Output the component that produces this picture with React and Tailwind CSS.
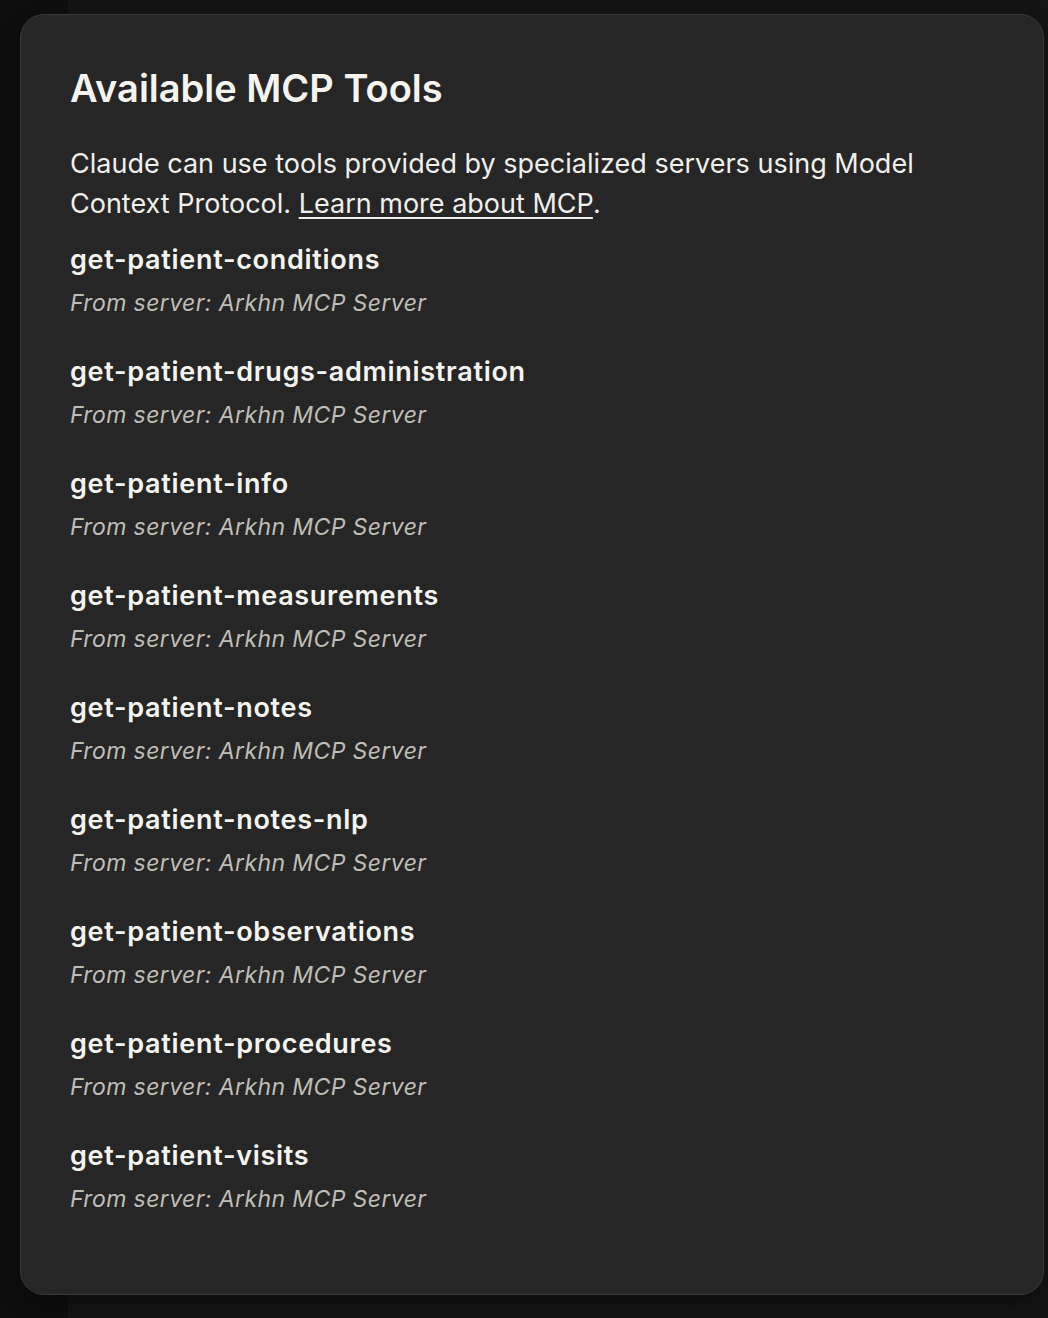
const tools = [
  'get-patient-conditions',
  'get-patient-drugs-administration',
  'get-patient-info',
  'get-patient-measurements',
  'get-patient-notes',
  'get-patient-notes-nlp',
  'get-patient-observations',
  'get-patient-procedures',
  'get-patient-visits',
];

export default function App() {
  return (
    <div className="relative flex min-h-[1318px] w-full bg-[#141414]" style={{ fontFamily: 'Inter, "Open Sans", sans-serif' }}>
      <div className="absolute inset-y-0 left-0 w-[68px] bg-[#0e0e0e]" />
      <div className="relative z-10 mt-[14px] ml-[20px] h-[1281px] w-[1024px] rounded-[24px] border border-[#3a3a38] bg-[#262626] px-[49px] pt-[51px] shadow-[0_10px_20px_rgba(0,0,0,0.35)]">
        <h2 className="text-[38px] leading-[44px] font-semibold text-[#f5f4ef]">Available MCP Tools</h2>
        <p className="mt-[34px] text-[27px] leading-[40px] text-[#f0efea]">
          Claude can use tools provided by specialized servers using Model
          <br />
          Context Protocol.{' '}
          <a href="#" className="underline underline-offset-4 decoration-2">Learn more about MCP</a>.
        </p>
        <ul className="mt-[18px]">
          {tools.map((t) => (
            <li key={t} className="h-[112px]">
              <div className="text-[27px] leading-[36px] font-semibold tracking-[0.7px] text-[#f5f4ef]">{t}</div>
              <div className="mt-[9px] text-[23px] leading-[32px] italic tracking-[0.4px] text-[#bfbdb6]">From server: Arkhn MCP Server</div>
            </li>
          ))}
        </ul>
      </div>
    </div>
  );
}
